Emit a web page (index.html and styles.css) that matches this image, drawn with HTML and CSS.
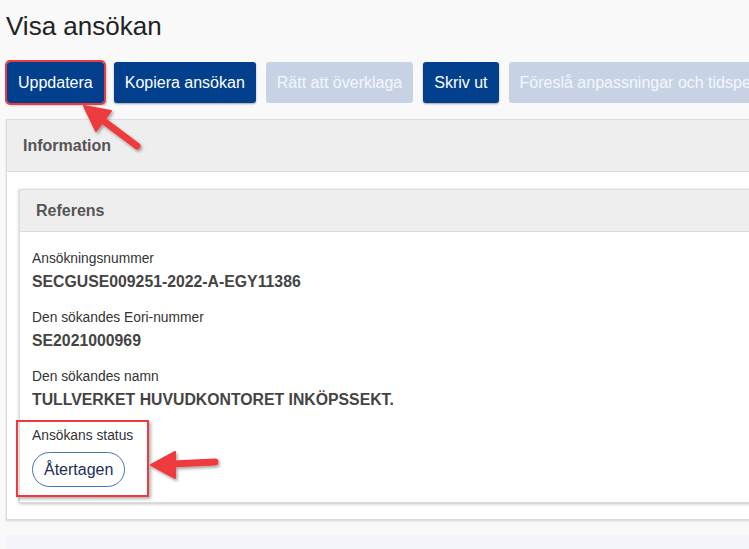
FILE: index.html
```html
<!DOCTYPE html>
<html lang="sv">
<head>
<meta charset="utf-8">
<title>Visa ansökan</title>
<link rel="stylesheet" href="styles.css">
</head>
<body>
<div class="page">
  <h1 class="title">Visa ansökan</h1>
  <div class="actions">
    <button class="btn btn-primary btn-marked">Uppdatera</button>
    <button class="btn btn-primary">Kopiera ansökan</button>
    <button class="btn btn-disabled">Rätt att överklaga</button>
    <button class="btn btn-primary">Skriv ut</button>
    <button class="btn btn-disabled">Föreslå anpassningar och tidsperioder</button>
  </div>
  <section class="panel">
    <div class="panel-head">Information</div>
    <div class="panel-body">
      <section class="panel inner">
        <div class="panel-head inner-head">Referens</div>
        <div class="inner-body">
          <div class="field">
            <div class="label">Ansökningsnummer</div>
            <div class="value">SECGUSE009251-2022-A-EGY11386</div>
          </div>
          <div class="field">
            <div class="label">Den sökandes Eori-nummer</div>
            <div class="value">SE2021000969</div>
          </div>
          <div class="field">
            <div class="label">Den sökandes namn</div>
            <div class="value">TULLVERKET HUVUDKONTORET INKÖPSSEKT.</div>
          </div>
          <div class="field field-status">
            <div class="label">Ansökans status</div>
            <span class="pill">Återtagen</span>
          </div>
        </div>
      </section>
    </div>
  </section>
  <div class="footer"></div>
</div>
<svg class="annot" width="749" height="549" viewBox="0 0 749 549" aria-hidden="true">
  <defs>
    <filter id="sh" x="-20%" y="-20%" width="140%" height="140%">
      <feDropShadow dx="1.5" dy="2" stdDeviation="1.5" flood-color="#000" flood-opacity="0.35"/>
    </filter>
  </defs>
  <g filter="url(#sh)" fill="#ee3a3e" stroke="#ee3a3e">
    <line x1="137" y1="146" x2="101" y2="119" stroke-width="7" stroke-linecap="round"/>
    <polygon points="84,106 111,111 96,131" stroke-width="2" stroke-linejoin="round"/>
    <line x1="215" y1="462" x2="172" y2="464" stroke-width="7" stroke-linecap="round"/>
    <polygon points="151,465 175,452 175,478" stroke-width="2" stroke-linejoin="round"/>
  </g>
</svg>
</body>
</html>
```

FILE: styles.css
```css
html, body {
  margin: 0;
  padding: 0;
}
body {
  background: #f9f9f9;
  font-family: "Liberation Sans", Arial, Helvetica, sans-serif;
  color: #333;
  overflow: hidden;
  width: 749px;
  height: 549px;
  position: relative;
}
.page {
  width: 800px;
  padding-left: 6px;
}
.title {
  margin: 11px 0 0;
  font-size: 26px;
  line-height: 30px;
  font-weight: normal;
  color: #222;
}
.actions {
  display: flex;
  flex-wrap: nowrap;
  gap: 10px;
  margin: 21px 0 0 1px;
  white-space: nowrap;
}
.btn {
  height: 41px;
  padding: 0 11px;
  border: 0;
  border-radius: 3px;
  font-family: inherit;
  font-size: 16px;
  color: #fff;
  flex: none;
}
.btn-primary {
  background: #023f8c;
  box-shadow: 0 1px 2px rgba(0, 0, 0, 0.35);
}
.btn-disabled {
  background: #c7d3e5;
  color: #f4f7fb;
}
.btn-marked {
  outline: 2px solid #ec3a3e;
  outline-offset: 0;
  box-shadow: 2px 2px 3px rgba(0, 0, 0, 0.35);
}
.panel {
  margin-top: 16px;
  border: 1px solid #dcdcdc;
  background: #fff;
  box-shadow: 0 1px 2px rgba(0, 0, 0, 0.15);
}
.panel-head {
  background: #eeeeee;
  border-bottom: 1px solid #dcdcdc;
  padding: 15px 16px;
  font-size: 16px;
  line-height: 21px;
  font-weight: bold;
  color: #555;
}
.panel-body {
  padding: 17px 0 16px 12px;
}
.inner {
  margin-top: 0;
  box-shadow: 0 1px 3px rgba(0, 0, 0, 0.25);
}
.inner-head {
  padding: 10px 16px;
}
.inner-body {
  padding: 17px 12px 15px;
}
.field {
  margin-bottom: 15px;
}
.field:last-child {
  margin-bottom: 0;
}
.label {
  font-size: 13.8px;
  line-height: 20px;
  color: #333;
}
.value {
  margin-top: 2px;
  font-size: 15.8px;
  line-height: 22px;
  font-weight: bold;
  color: #444;
}
.field-status {
  position: relative;
  display: inline-block;
}
.field-status::before {
  content: "";
  position: absolute;
  top: -6px;
  left: -16px;
  right: -16px;
  bottom: -10px;
  border: 2px solid #ec3a3e;
  box-shadow: 2px 2px 3px rgba(0, 0, 0, 0.3);
  pointer-events: none;
}
.pill {
  display: inline-block;
  margin-top: 6px;
  height: 33px;
  line-height: 33px;
  padding: 0 11px;
  border: 1px solid #4a72b5;
  border-radius: 18px;
  font-size: 16px;
  color: #1b2f57;
  vertical-align: top;
}
.footer {
  margin-top: 15px;
  height: 40px;
  background: #f4f5fa;
}
.annot {
  position: absolute;
  left: 0;
  top: 0;
  pointer-events: none;
}
```
